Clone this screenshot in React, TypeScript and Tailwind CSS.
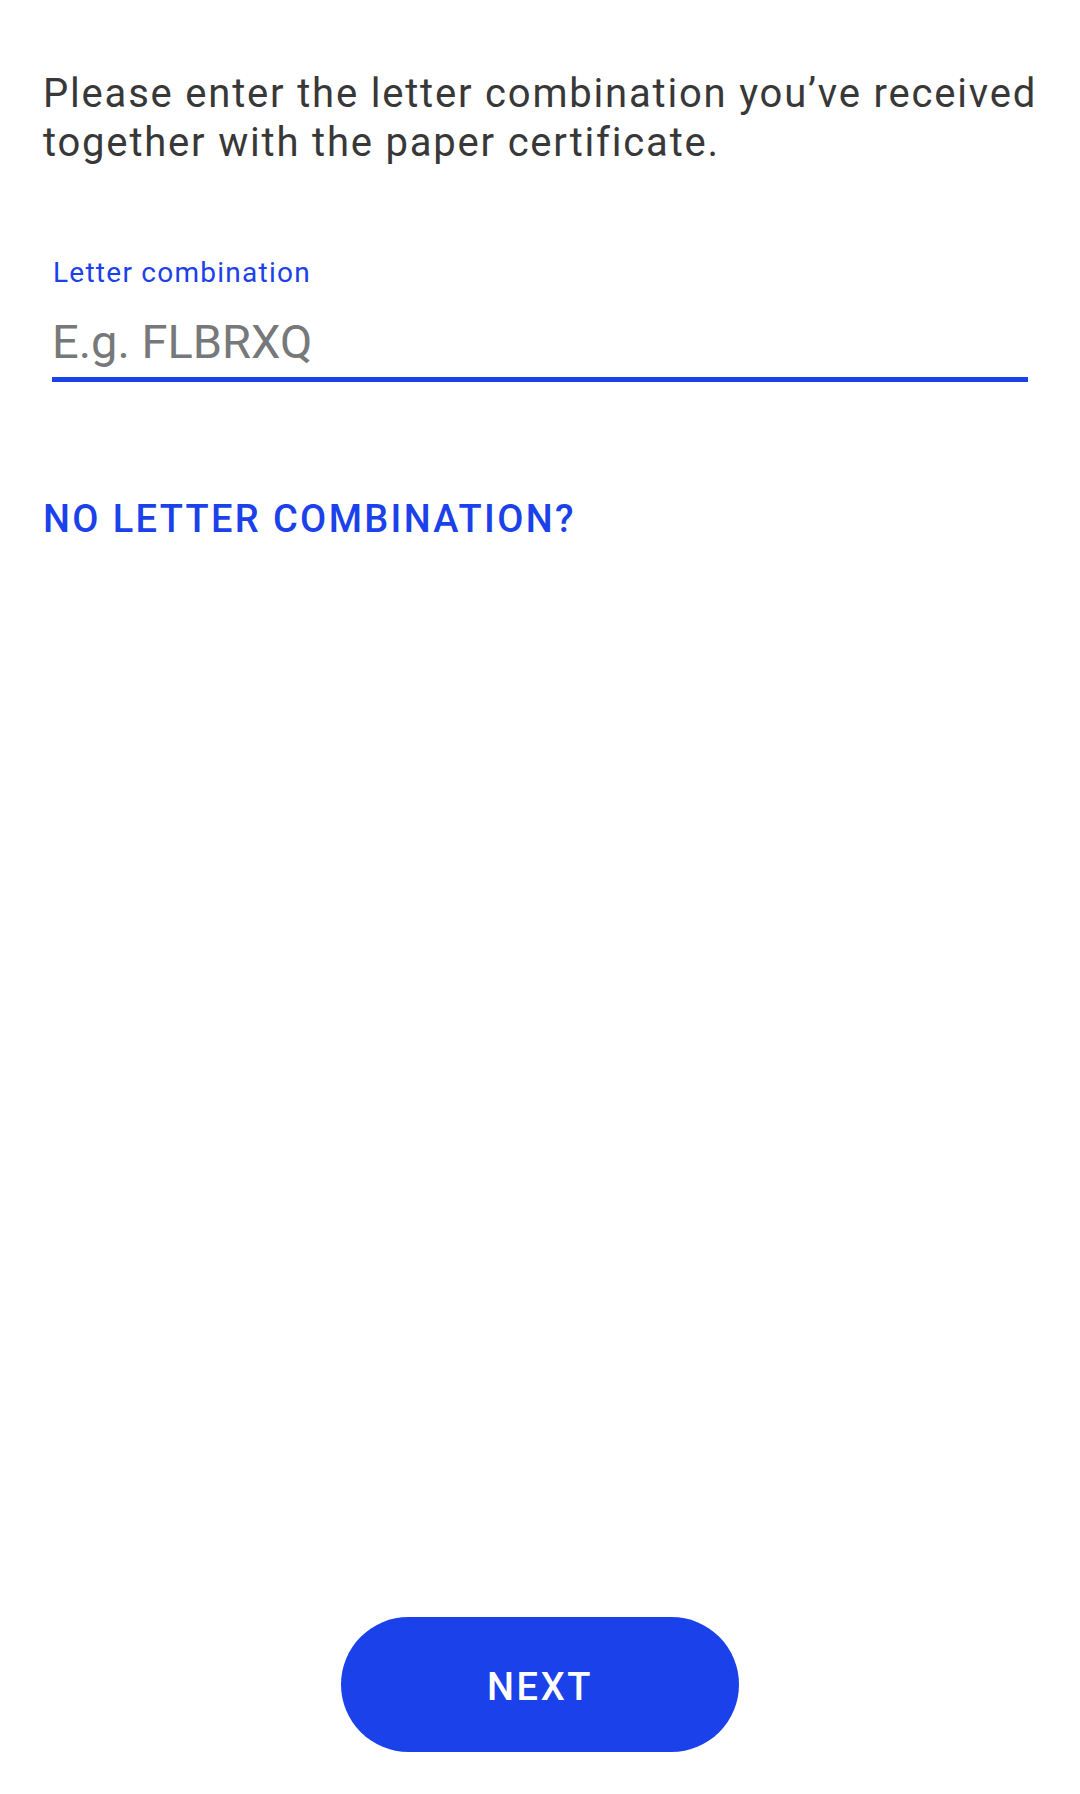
import React, { useState } from 'react';

const App: React.FC = () => {
  const [code, setCode] = useState('');

  return (
    <div className="flex flex-col h-screen bg-white font-['Roboto',_'Noto_Sans',_sans-serif]">
      <p className="pt-[69px] pl-[43px] pr-[20px] text-[40px] leading-[49px] tracking-[0.045em] text-[#383838]">
        Please enter the letter combination you’ve received together with the paper certificate.
      </p>

      <div className="mt-[90px] mx-[52px]">
        <label htmlFor="code" className="block pl-px text-[28px] leading-[32px] tracking-[0.045em] text-[#1b41eb]">
          Letter combination
        </label>
        <input
          id="code"
          value={code}
          onChange={(e) => setCode(e.target.value)}
          placeholder="E.g. FLBRXQ"
          className="mt-[25px] w-full pb-[7px] text-[47px] leading-[56px] text-[#383838] placeholder:text-[#767879] outline-none border-b-[5px] border-[#1b41eb] bg-transparent"
        />
      </div>

      <button className="self-start mt-[115px] ml-[43px] text-[38px] leading-[44px] font-medium tracking-[0.062em] text-[#1b41eb]">
        NO LETTER COMBINATION?
      </button>

      <div className="flex-1" />

      <div className="flex justify-center mb-[42px]">
        <button className="w-[398px] h-[135px] rounded-full bg-[#1b41eb] text-white text-[38px] leading-[44px] pt-[4px] font-medium tracking-[0.07em]">
          NEXT
        </button>
      </div>
    </div>
  );
};

export default App;
